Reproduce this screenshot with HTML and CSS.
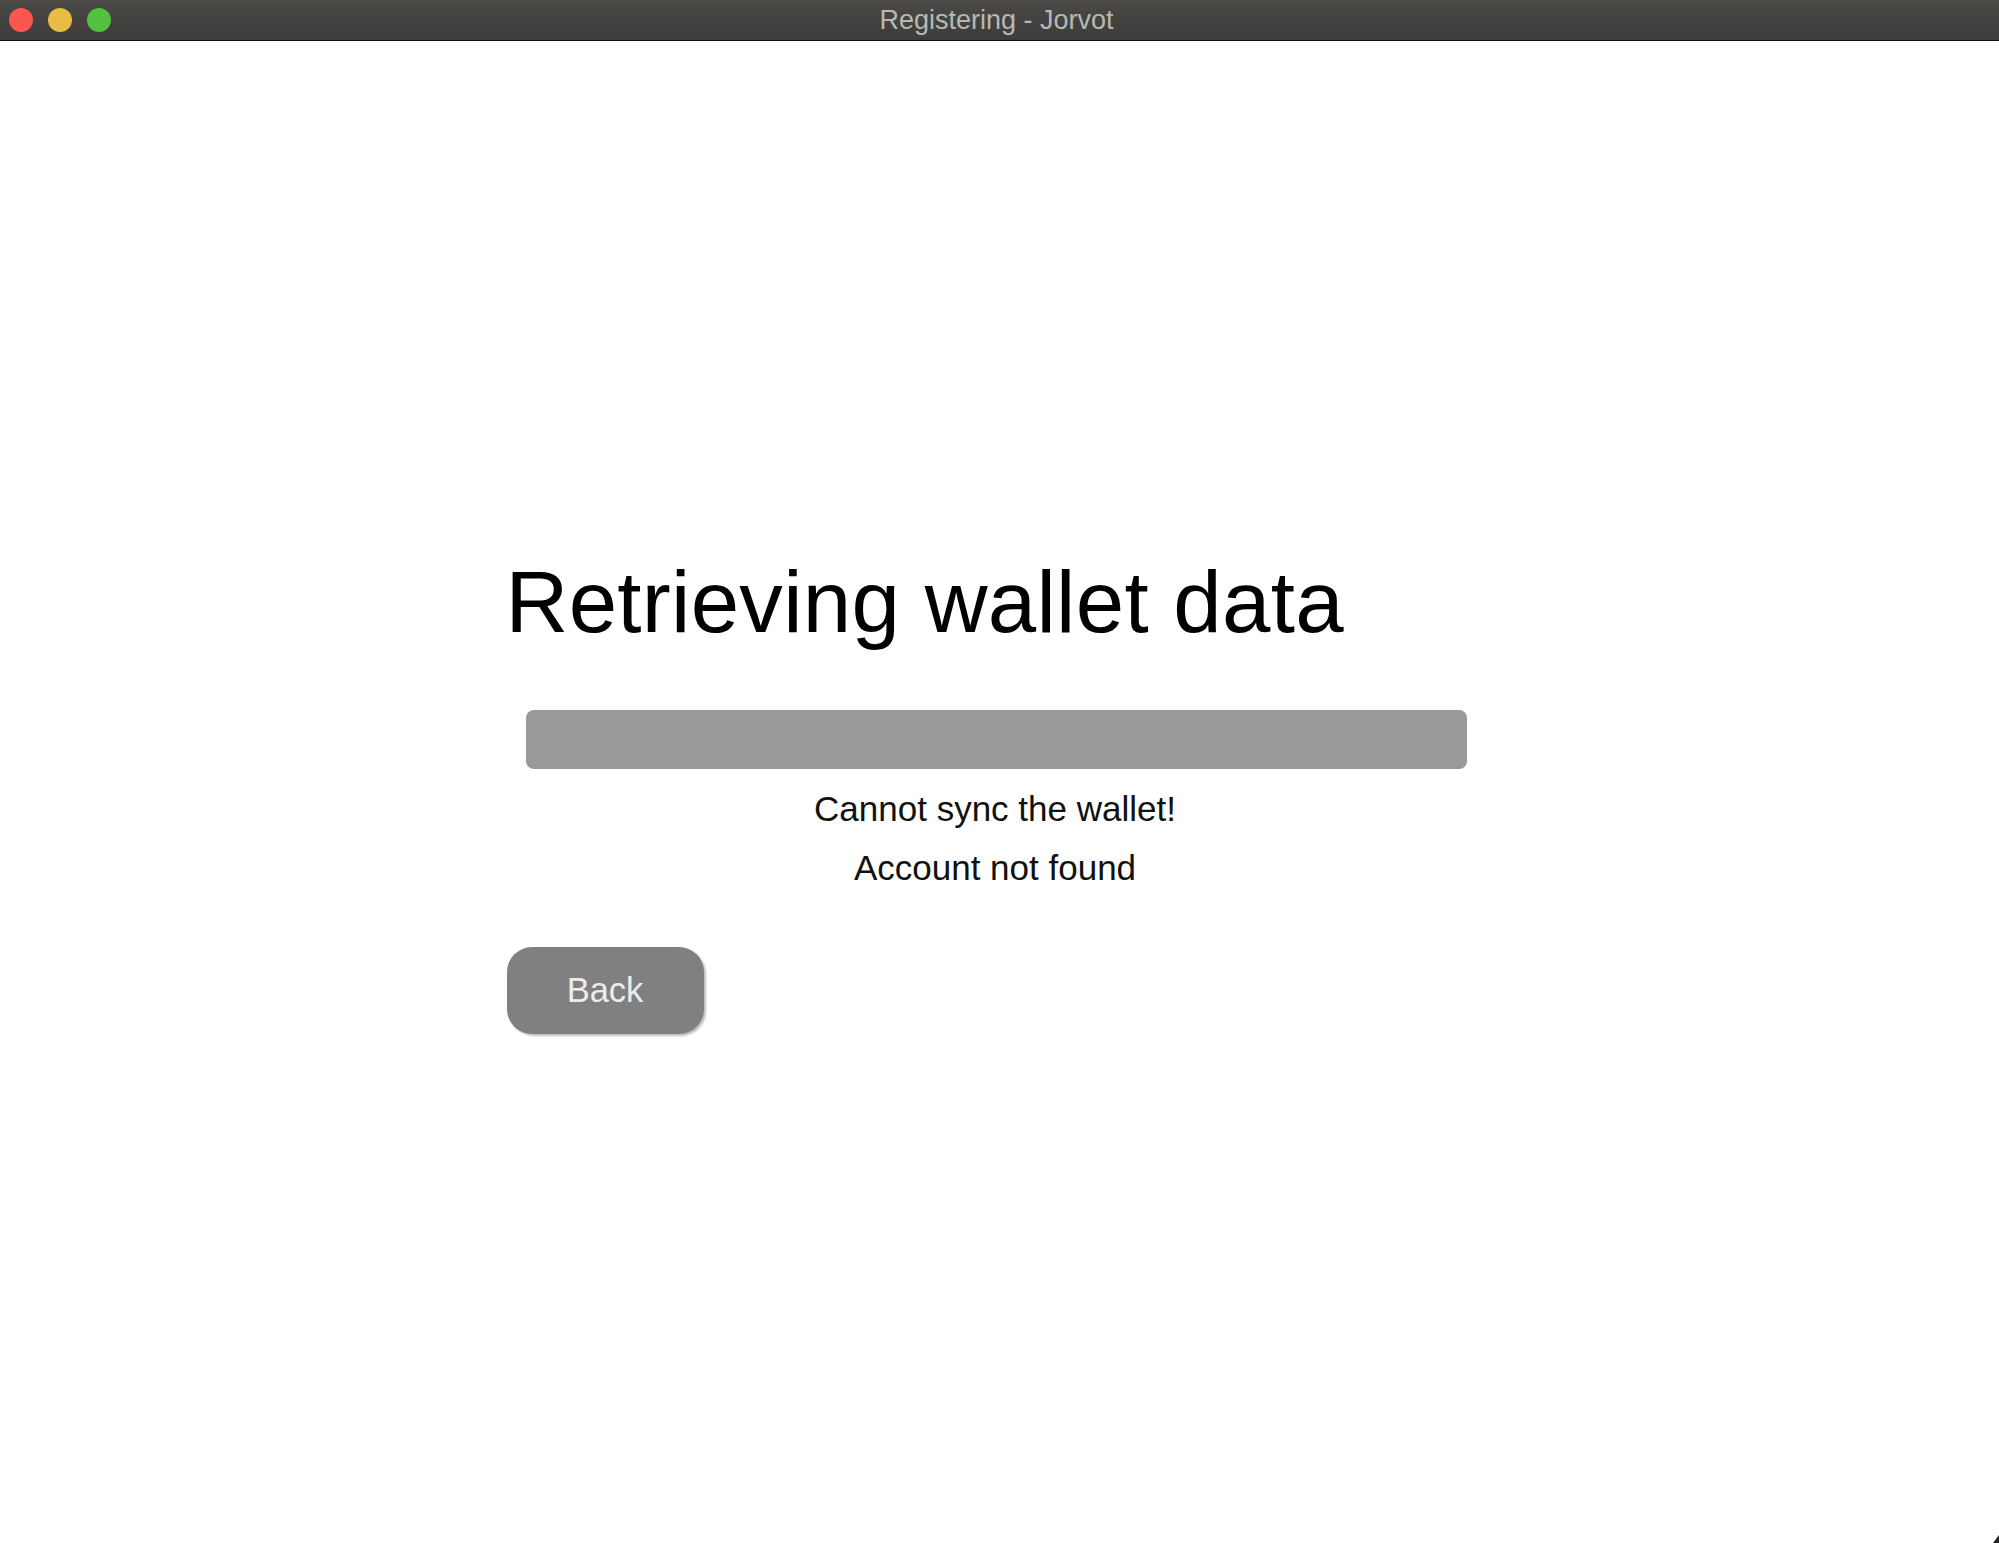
FILE: index.html
```html
<!DOCTYPE html>
<html>
<head>
<meta charset="utf-8">
<title>Registering - Jorvot</title>
<link rel="stylesheet" href="styles.css">
</head>
<body>
<div class="window">
  <header class="titlebar">
    <div class="lights">
      <span class="light red"></span>
      <span class="light yellow"></span>
      <span class="light green"></span>
    </div>
    <div class="title">Registering - Jorvot</div>
  </header>
  <main class="content">
    <div class="column">
      <h1 class="heading">Retrieving wallet data</h1>
      <div class="progress"></div>
      <p class="status">Cannot sync the wallet!</p>
      <p class="status second">Account not found</p>
      <button class="back">Back</button>
    </div>
  </main>
  <div class="corner"></div>
</div>
</body>
</html>
```
FILE: styles.css
```css
html, body {
  margin: 0;
  padding: 0;
  background: #ffffff;
}
body {
  font-family: "Liberation Sans", Arial, sans-serif;
  color: #000;
}
.window {
  position: relative;
  width: 1999px;
  height: 1543px;
  overflow: hidden;
  background: #fff;
}
.titlebar {
  position: relative;
  height: 40px;
  background: linear-gradient(#4b4946, #3e3c3a);
  border-bottom: 1px solid #111;
  display: flex;
  align-items: center;
  justify-content: center;
}
.lights {
  position: absolute;
  left: 9px;
  top: 8px;
  display: flex;
  gap: 15px;
}
.light {
  width: 24px;
  height: 24px;
  border-radius: 50%;
  display: block;
}
.red { background: #fc5650; }
.yellow { background: #e9bd43; }
.green { background: #52c23f; }
.title {
  font-family: "Liberation Sans", Arial, sans-serif;
  font-size: 27px;
  color: #b8b7b5;
  line-height: 40px;
  margin-left: -6px;
}
.content {
  display: flex;
  justify-content: center;
  padding-top: 511px;
}
.column {
  width: 979px;
  margin-left: -7px;
  display: flex;
  flex-direction: column;
  align-items: stretch;
}
.heading {
  margin: 0;
  font-weight: normal;
  font-size: 87px;
  line-height: 100px;
  letter-spacing: 0.3px;
  color: #000;
  margin-left: -1px;
}
.progress {
  margin: 58px 19px 0 19px;
  height: 59px;
  background: #999999;
  border-radius: 8px;
}
.status {
  margin: 18px 0 0 0;
  text-align: center;
  font-size: 35px;
  line-height: 44px;
  color: #111;
  padding-right: 2px;
}
.status.second {
  margin-top: 15px;
}
.back {
  margin-top: 57px;
  align-self: flex-start;
  width: 197px;
  height: 87px;
  border: none;
  border-radius: 25px;
  background: #808080;
  color: #ececec;
  font-family: "Liberation Sans", Arial, sans-serif;
  font-size: 34.5px;
  padding: 0;
  box-shadow: 2px 2px 2px rgba(0, 0, 0, 0.25);
}
.corner {
  position: absolute;
  right: 0;
  bottom: 0;
  width: 0;
  height: 0;
  border-left: 6px solid transparent;
  border-bottom: 8px solid #222;
}
```
